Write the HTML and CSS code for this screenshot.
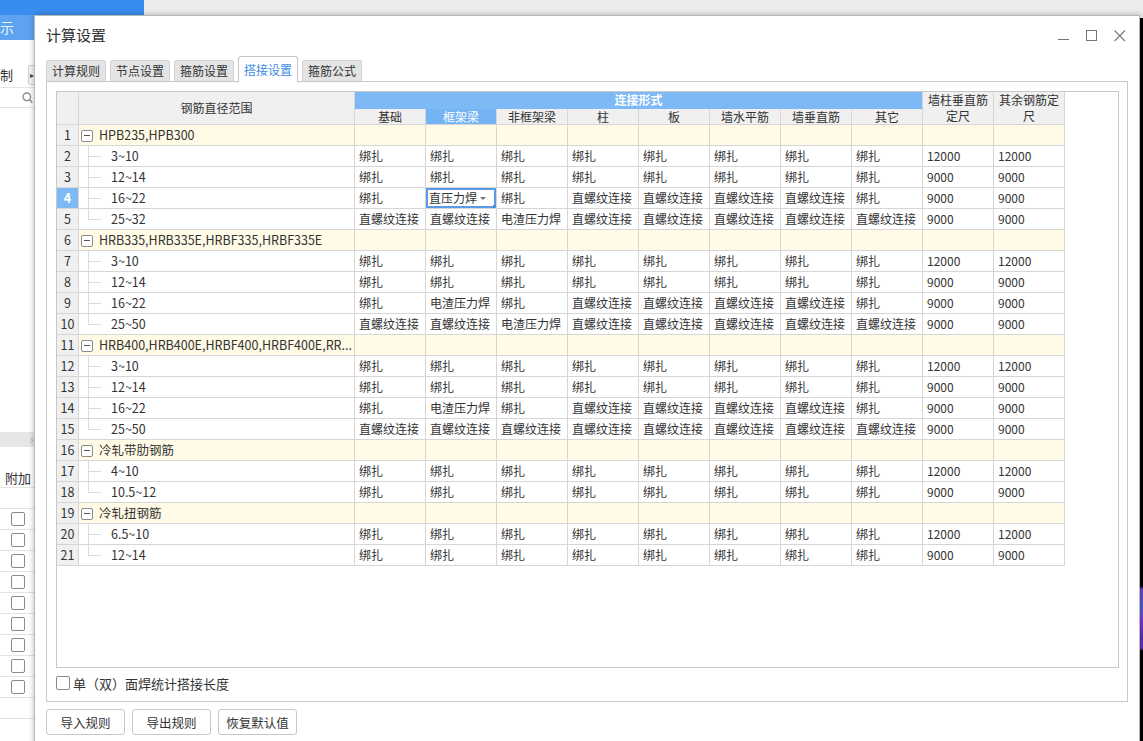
FILE: index.html
```html
<!DOCTYPE html>
<html lang="zh">
<head>
<meta charset="utf-8">
<title>计算设置</title>
<link rel="stylesheet" href="styles.css">
</head>
<body>
<div class="desktop">
  <div class="app-top">
    <div class="app-top-blue"></div>
    <div class="app-top-grey"></div>
  </div>
  <div class="app-body">
    <div class="sidebar">
      <div class="sb-blue">示</div>
      <div class="sb-gap"></div>
      <div class="sb-row sb-tool"><span class="sb-text">制</span><span class="sb-btn">▸</span></div>
      <div class="sb-row sb-search">
        <svg class="sb-mag" width="11" height="12" viewBox="0 0 11 12"><circle cx="4.8" cy="4.8" r="3.8" fill="none" stroke="#888" stroke-width="1.3"/><line x1="7.6" y1="7.8" x2="10.3" y2="10.8" stroke="#888" stroke-width="1.4"/></svg>
      </div>
      <div class="sb-fill"></div>
      <div class="sb-bar"><span class="sb-chev">›</span></div>
      <div class="sb-gap2"></div>
      <div class="sb-row sb-head">附加</div>
      <div class="sb-row sb-line"></div>
      <div class="sb-row sb-line"><span class="sb-check"></span></div>
      <div class="sb-row sb-line"><span class="sb-check"></span></div>
      <div class="sb-row sb-line"><span class="sb-check"></span></div>
      <div class="sb-row sb-line"><span class="sb-check"></span></div>
      <div class="sb-row sb-line"><span class="sb-check"></span></div>
      <div class="sb-row sb-line"><span class="sb-check"></span></div>
      <div class="sb-row sb-line"><span class="sb-check"></span></div>
      <div class="sb-row sb-line"><span class="sb-check"></span></div>
      <div class="sb-row sb-line"><span class="sb-check"></span></div>
      <div class="sb-row sb-line"></div>
    </div>
    <div class="app-main"></div>
    <div class="app-edge"></div>
  </div>

  <div class="dialog">
    <div class="titlebar">
      <span class="title">计算设置</span>
      <div class="controls">
        <svg width="12" height="12" viewBox="0 0 12 12"><line x1="0" y1="9.5" x2="11" y2="9.5" stroke="#777" stroke-width="1"/></svg>
        <svg width="12" height="12" viewBox="0 0 12 12"><rect x="0.5" y="0.5" width="10" height="10" fill="none" stroke="#777" stroke-width="1"/></svg>
        <svg width="12" height="12" viewBox="0 0 12 12"><path d="M0.5 0.5 L11 11 M11 0.5 L0.5 11" stroke="#777" stroke-width="1.1" fill="none"/></svg>
      </div>
    </div>
    <div class="tabs">
      <div class="tab">计算规则</div>
      <div class="tab">节点设置</div>
      <div class="tab">箍筋设置</div>
      <div class="tab active">搭接设置</div>
      <div class="tab">箍筋公式</div>
    </div>
    <div class="panel">
      <div class="grid">
        <table class="tbl">
          <colgroup>
            <col class="w-n"><col class="w-name">
            <col class="w-d"><col class="w-d"><col class="w-d"><col class="w-d"><col class="w-d">
            <col class="w-d"><col class="w-d"><col class="w-d"><col class="w-d"><col class="w-d">
          </colgroup>
          <thead>
            <tr class="h1">
              <th class="n" rowspan="2"></th>
              <th rowspan="2">钢筋直径范围</th>
              <th class="band" colspan="8">连接形式</th>
              <th rowspan="2">墙柱垂直筋<br>定尺</th>
              <th rowspan="2">其余钢筋定<br>尺</th>
            </tr>
            <tr class="h2">
              <th>基础</th><th class="hl">框架梁</th><th>非框架梁</th><th>柱</th><th>板</th><th>墙水平筋</th><th>墙垂直筋</th><th>其它</th>
            </tr>
          </thead>
          <tbody>
            <tr class="grp"><td class="n">1</td><td class="name g"><span class="box"></span>HPB235,HPB300</td><td></td><td></td><td></td><td></td><td></td><td></td><td></td><td></td><td></td><td></td></tr>
            <tr><td class="n">2</td><td class="name c">3~10</td><td>绑扎</td><td>绑扎</td><td>绑扎</td><td>绑扎</td><td>绑扎</td><td>绑扎</td><td>绑扎</td><td>绑扎</td><td>12000</td><td>12000</td></tr>
            <tr><td class="n">3</td><td class="name c">12~14</td><td>绑扎</td><td>绑扎</td><td>绑扎</td><td>绑扎</td><td>绑扎</td><td>绑扎</td><td>绑扎</td><td>绑扎</td><td>9000</td><td>9000</td></tr>
            <tr><td class="n cur">4</td><td class="name c">16~22</td><td>绑扎</td><td class="sel">直压力焊<span class="dd"></span><span class="handle"></span></td><td>绑扎</td><td>直螺纹连接</td><td>直螺纹连接</td><td>直螺纹连接</td><td>直螺纹连接</td><td>绑扎</td><td>9000</td><td>9000</td></tr>
            <tr><td class="n">5</td><td class="name c last">25~32</td><td>直螺纹连接</td><td>直螺纹连接</td><td>电渣压力焊</td><td>直螺纹连接</td><td>直螺纹连接</td><td>直螺纹连接</td><td>直螺纹连接</td><td>直螺纹连接</td><td>9000</td><td>9000</td></tr>
            <tr class="grp"><td class="n">6</td><td class="name g"><span class="box"></span>HRB335,HRB335E,HRBF335,HRBF335E</td><td></td><td></td><td></td><td></td><td></td><td></td><td></td><td></td><td></td><td></td></tr>
            <tr><td class="n">7</td><td class="name c">3~10</td><td>绑扎</td><td>绑扎</td><td>绑扎</td><td>绑扎</td><td>绑扎</td><td>绑扎</td><td>绑扎</td><td>绑扎</td><td>12000</td><td>12000</td></tr>
            <tr><td class="n">8</td><td class="name c">12~14</td><td>绑扎</td><td>绑扎</td><td>绑扎</td><td>绑扎</td><td>绑扎</td><td>绑扎</td><td>绑扎</td><td>绑扎</td><td>9000</td><td>9000</td></tr>
            <tr><td class="n">9</td><td class="name c">16~22</td><td>绑扎</td><td>电渣压力焊</td><td>绑扎</td><td>直螺纹连接</td><td>直螺纹连接</td><td>直螺纹连接</td><td>直螺纹连接</td><td>绑扎</td><td>9000</td><td>9000</td></tr>
            <tr><td class="n">10</td><td class="name c last">25~50</td><td>直螺纹连接</td><td>直螺纹连接</td><td>电渣压力焊</td><td>直螺纹连接</td><td>直螺纹连接</td><td>直螺纹连接</td><td>直螺纹连接</td><td>直螺纹连接</td><td>9000</td><td>9000</td></tr>
            <tr class="grp"><td class="n">11</td><td class="name g"><span class="box"></span>HRB400,HRB400E,HRBF400,HRBF400E,RR...</td><td></td><td></td><td></td><td></td><td></td><td></td><td></td><td></td><td></td><td></td></tr>
            <tr><td class="n">12</td><td class="name c">3~10</td><td>绑扎</td><td>绑扎</td><td>绑扎</td><td>绑扎</td><td>绑扎</td><td>绑扎</td><td>绑扎</td><td>绑扎</td><td>12000</td><td>12000</td></tr>
            <tr><td class="n">13</td><td class="name c">12~14</td><td>绑扎</td><td>绑扎</td><td>绑扎</td><td>绑扎</td><td>绑扎</td><td>绑扎</td><td>绑扎</td><td>绑扎</td><td>9000</td><td>9000</td></tr>
            <tr><td class="n">14</td><td class="name c">16~22</td><td>绑扎</td><td>电渣压力焊</td><td>绑扎</td><td>直螺纹连接</td><td>直螺纹连接</td><td>直螺纹连接</td><td>直螺纹连接</td><td>绑扎</td><td>9000</td><td>9000</td></tr>
            <tr><td class="n">15</td><td class="name c last">25~50</td><td>直螺纹连接</td><td>直螺纹连接</td><td>直螺纹连接</td><td>直螺纹连接</td><td>直螺纹连接</td><td>直螺纹连接</td><td>直螺纹连接</td><td>直螺纹连接</td><td>9000</td><td>9000</td></tr>
            <tr class="grp"><td class="n">16</td><td class="name g"><span class="box"></span>冷轧带肋钢筋</td><td></td><td></td><td></td><td></td><td></td><td></td><td></td><td></td><td></td><td></td></tr>
            <tr><td class="n">17</td><td class="name c">4~10</td><td>绑扎</td><td>绑扎</td><td>绑扎</td><td>绑扎</td><td>绑扎</td><td>绑扎</td><td>绑扎</td><td>绑扎</td><td>12000</td><td>12000</td></tr>
            <tr><td class="n">18</td><td class="name c last">10.5~12</td><td>绑扎</td><td>绑扎</td><td>绑扎</td><td>绑扎</td><td>绑扎</td><td>绑扎</td><td>绑扎</td><td>绑扎</td><td>9000</td><td>9000</td></tr>
            <tr class="grp"><td class="n">19</td><td class="name g"><span class="box"></span>冷轧扭钢筋</td><td></td><td></td><td></td><td></td><td></td><td></td><td></td><td></td><td></td><td></td></tr>
            <tr><td class="n">20</td><td class="name c">6.5~10</td><td>绑扎</td><td>绑扎</td><td>绑扎</td><td>绑扎</td><td>绑扎</td><td>绑扎</td><td>绑扎</td><td>绑扎</td><td>12000</td><td>12000</td></tr>
            <tr><td class="n">21</td><td class="name c last">12~14</td><td>绑扎</td><td>绑扎</td><td>绑扎</td><td>绑扎</td><td>绑扎</td><td>绑扎</td><td>绑扎</td><td>绑扎</td><td>9000</td><td>9000</td></tr>
          </tbody>
        </table>
      </div>
      <label class="opt"><span class="chk"></span>单（双）面焊统计搭接长度</label>
    </div>
    <div class="buttons">
      <button class="btn">导入规则</button>
      <button class="btn">导出规则</button>
      <button class="btn">恢复默认值</button>
    </div>
  </div>
</div>
</body>
</html>
```

FILE: styles.css
```css
* { box-sizing: border-box; }
html, body { margin: 0; padding: 0; }
body {
  font-family: "Noto Sans CJK SC", "Noto Sans", sans-serif;
  font-size: 12px;
  color: #333;
  background: #ececec;
}
.desktop {
  position: relative;
  width: 1143px;
  height: 741px;
  overflow: hidden;
  display: flex;
  flex-direction: column;
}
.app-top { height: 15px; display: flex; flex: 0 0 15px; }
.app-top-blue { width: 144px; background: #3a8df0; }
.app-top-grey { flex: 1; background: #ececec; }
.app-body { flex: 1; display: flex; }
.sidebar {
  width: 140px;
  background: #fff;
  display: flex;
  flex-direction: column;
  font-size: 13px;
}
.sb-blue {
  height: 25px;
  background: #5ea2f2;
  color: #e8f2ff;
  line-height: 25px;
  font-size: 14px;
  padding-left: 0;
}
.sb-gap { height: 22px; }
.sb-row { border-bottom: 1px solid #e4e4e4; display: flex; align-items: center; }
.sb-tool { height: 26px; }
.sb-text { width: 28px; }
.sb-btn {
  width: 8px; height: 20px;
  border: 1px solid #d0d0d0; border-radius: 2px;
  font-size: 8px; color: #444;
  display: flex; align-items: center; justify-content: center;
  background: #f4f4f4;
}
.sb-search { height: 20px; }
.sb-mag { margin-left: 22px; }
.sb-fill { height: 324px; }
.sb-bar { height: 15px; background: #e6e6e6; color: #aaa; font-size: 12px; line-height: 13px; }
.sb-chev { margin-left: 30px; }
.sb-gap2 { height: 21px; }
.sb-head { height: 20px; padding-left: 5px; }
.sb-line { height: 21px; }
.sb-check {
  width: 14px; height: 14px; margin-left: 11px;
  border: 1px solid #8a8a8a; border-radius: 2px; background: #fff;
}
.app-main { flex: 1; background: #fff; }
.app-edge {
  width: 4px;
  margin-top: 3px;
  background: linear-gradient(#000 0, #000 568px, #6a3fc8 571px, #4c5ed0 588px, #7a35d8 603px, #5b2db8 620px, #6a2ec8 630px, #000 633px);
}

/* dialog window */
.dialog {
  position: absolute;
  left: 34px;
  top: 15px;
  width: 1106px;
  height: 740px;
  background: #fff;
  border: 1px solid #b8b8b8;
  box-shadow: 0 0 6px rgba(0,0,0,0.28);
  display: flex;
  flex-direction: column;
}
.titlebar {
  height: 39px;
  display: flex;
  align-items: center;
  justify-content: space-between;
  padding: 0 13px 3px 11px;
}
.title { font-size: 15px; color: #333; }
.controls { display: flex; gap: 16px; align-items: center; margin-top: 3px; }
.tabs {
  height: 26px;
  display: flex;
  align-items: flex-end;
  gap: 4px;
  padding-left: 11px;
}
.tab {
  height: 21px;
  padding: 0 5px;
  background: #e4e4e4;
  border: 1px solid #d2d2d2;
  border-bottom: none;
  border-radius: 3px 3px 0 0;
  line-height: 20px;
  font-size: 12px;
  color: #333;
}
.tab.active {
  height: 26px;
  line-height: 25px;
  background: #fff;
  border-color: #c6c6c6;
  color: #3a8be6;
  margin-bottom: -1px;
  position: relative;
}
.panel {
  margin: 0 11px;
  height: 621px;
  border: 1px solid #c8c8c8;
  padding: 9px 8px 0 9px;
  display: flex;
  flex-direction: column;
}
.grid {
  height: 578px;
  border: 1px solid #c8c8c8;
  background: #fff;
  overflow: hidden;
}
.tbl {
  border-collapse: collapse;
  table-layout: fixed;
  width: 1008px;
  margin: -1px 0 0 -1px;
}
.w-n { width: 22px; }
.w-name { width: 276px; }
.w-d { width: 71px; }
.tbl th, .tbl td {
  border: 1px solid #d6d6d6;
  padding: 0;
  white-space: nowrap;
  overflow: hidden;
  font-weight: normal;
}
.tbl th {
  background: #f0f0f0;
  height: 17px;
  line-height: 16px;
  text-align: center;
  color: #333;
}
.tbl tr.h2 th { height: 16px; line-height: 15px; }
.tbl th.band {
  background: #7db9f5;
  color: #fff;
  font-weight: bold;
  border-color: #7db9f5 #d6d6d6;
}
.tbl th.hl { background: #74b3f4; color: #fff; }
.tbl td {
  height: 21px;
  line-height: 20px;
  padding-left: 4px;
  color: #333;
}
.tbl td.n {
  background: #f0f0f0;
  text-align: center;
  padding: 0;
  font-size: 12.5px;
}
.tbl td.n.cur { background: #7db9f5; color: #fff; font-weight: bold; }
.tbl tr.grp td { background: #fffbe6; }
.tbl tr.grp td.n { background: #f0f0f0; }
.tbl td.name { font-size: 12.5px; }
.tbl td.g { padding-left: 2px; }
.box {
  display: inline-block;
  width: 12px; height: 12px;
  border: 1px solid #8c8c8c;
  border-radius: 2px;
  margin-right: 6px;
  vertical-align: -2px;
  position: relative;
  background: #fff;
}
.box::after {
  content: "";
  position: absolute;
  left: 2px; right: 2px; top: 4px;
  border-top: 1px solid #555;
}
.tbl td.c { position: relative; padding-left: 32px; }
.tbl td.c::before {
  content: "";
  position: absolute;
  left: 9px; top: 0; bottom: 0;
  border-left: 1px solid #dcdcdc;
}
.tbl td.c.last::before { bottom: 50%; }
.tbl td.c::after {
  content: "";
  position: absolute;
  left: 9px; width: 13px; top: 50%;
  border-top: 1px solid #dcdcdc;
}
.tbl td.sel {
  position: relative;
  box-shadow: inset 0 0 0 2px #5b9ae6;
  padding-left: 3px;
}
.dd {
  position: absolute;
  right: 10px; top: 9px;
  border-left: 3px solid transparent;
  border-right: 3px solid transparent;
  border-top: 3px solid #777;
}
.handle {
  position: absolute;
  right: -1px; bottom: -1px;
  width: 4px; height: 4px;
  background: #4a8fe2;
}
.opt {
  height: 33px;
  display: flex;
  align-items: center;
  font-size: 13px;
  color: #333;
  padding-bottom: 3px;
}
.chk {
  width: 14px; height: 14px;
  border: 1px solid #8a8a8a; border-radius: 2px;
  margin-right: 3px;
  background: #fff;
}
.buttons {
  display: flex;
  gap: 7px;
  padding: 7px 0 0 11px;
}
.btn {
  width: 79px; height: 26px;
  background: #fff;
  border: 1px solid #c8c8c8;
  border-radius: 3px;
  font-family: "Noto Sans CJK SC", "Noto Sans", sans-serif;
  font-size: 12.5px;
  color: #333;
  padding: 0;
}
```
